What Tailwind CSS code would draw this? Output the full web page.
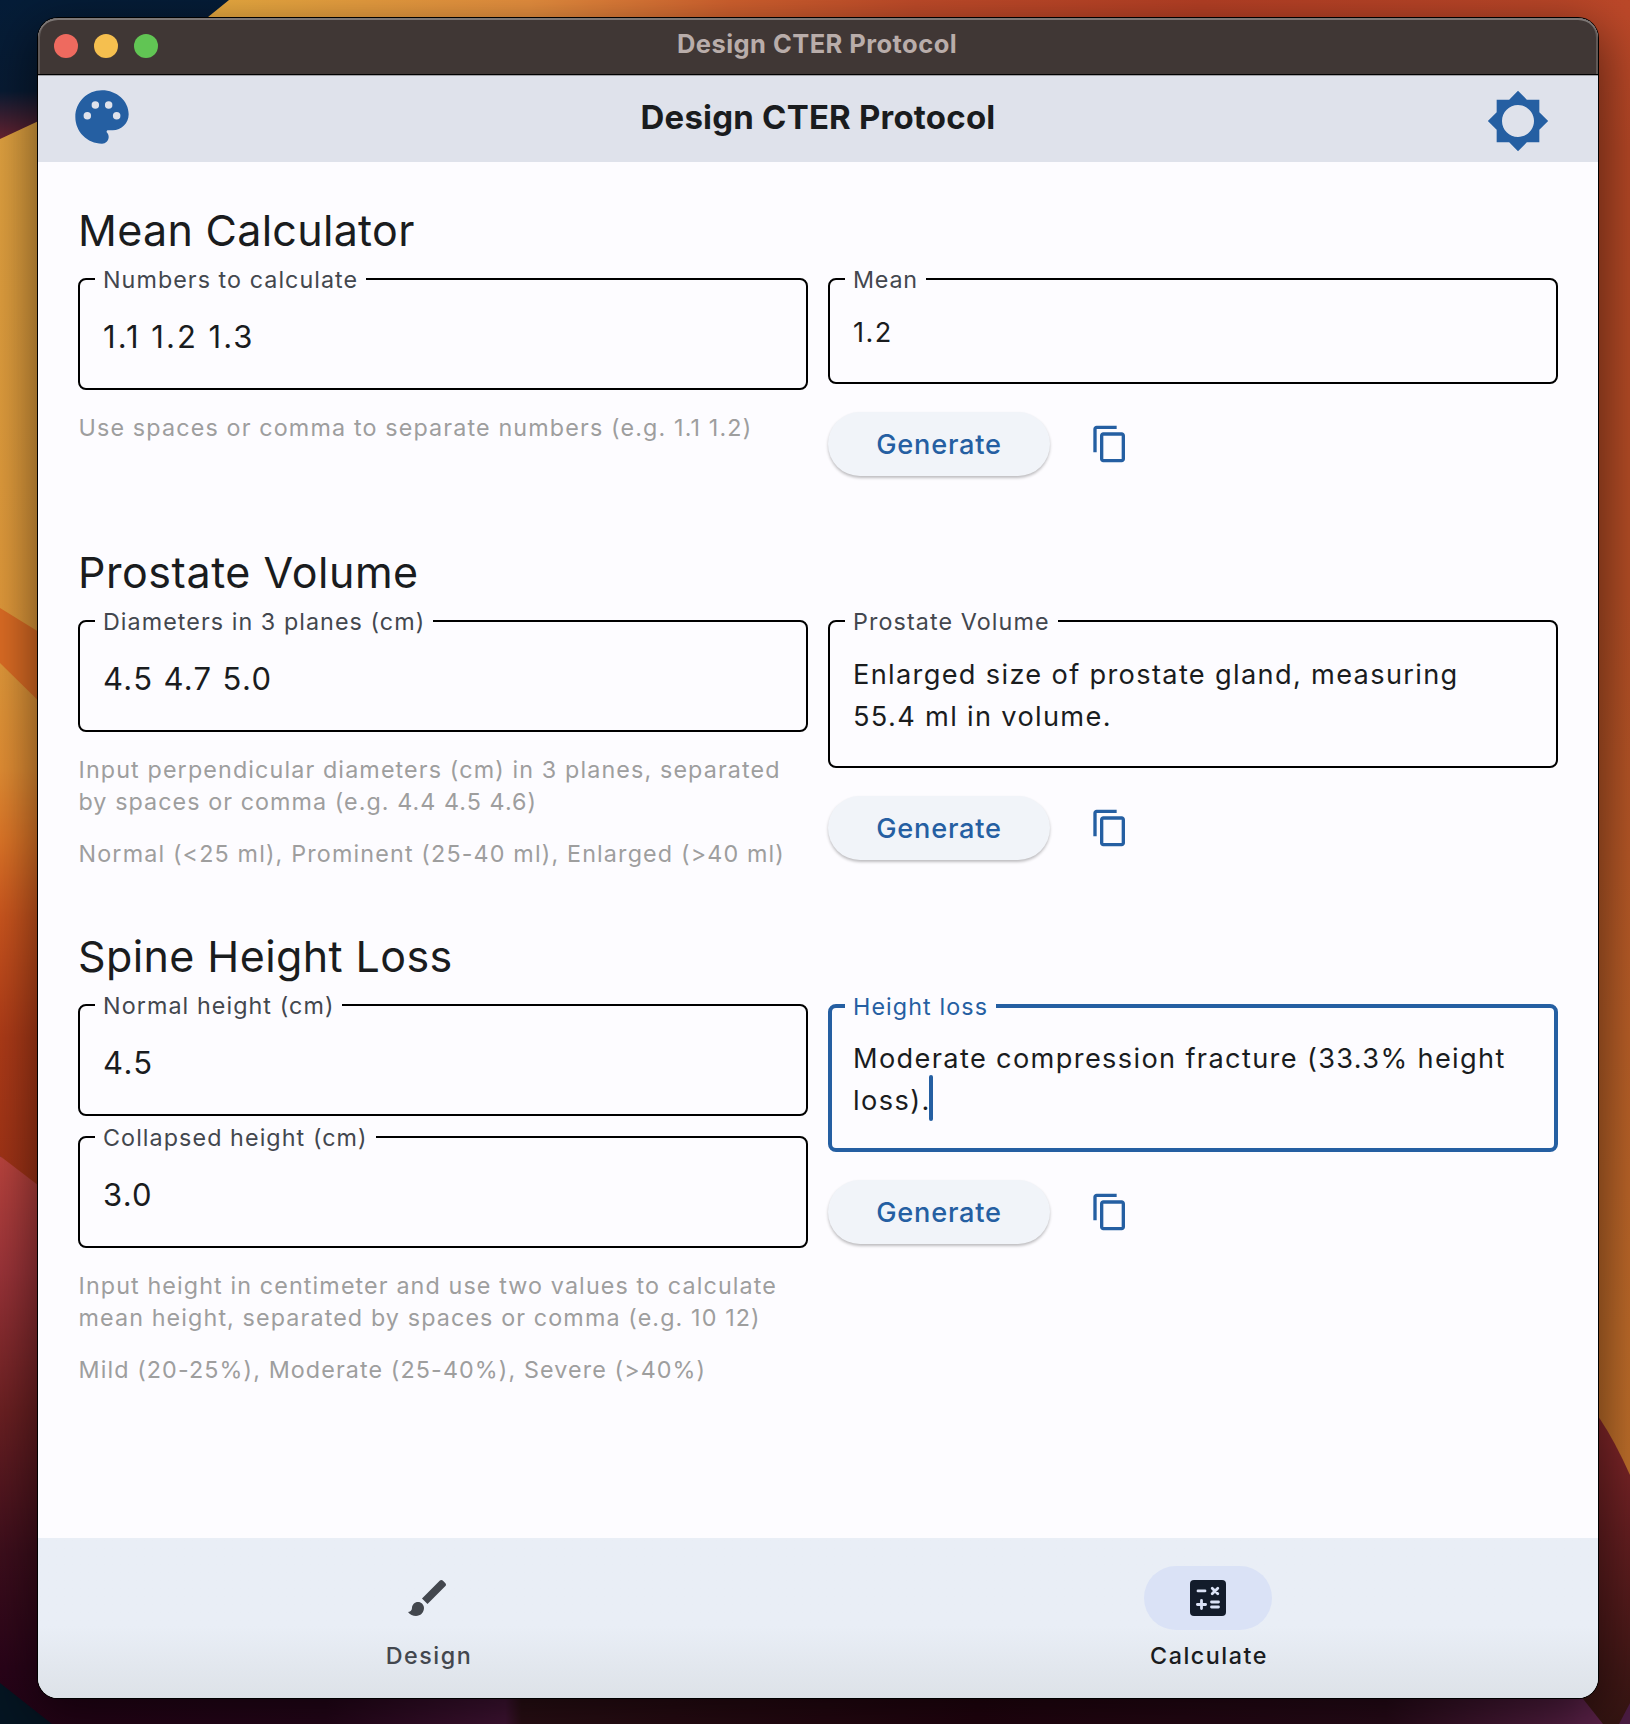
<!DOCTYPE html>
<html lang="en">
<head>
<meta charset="utf-8">
<title>Design CTER Protocol</title>
<script src="https://cdn.jsdelivr.net/npm/@tailwindcss/browser@4"></script>
</head>
<body class="relative h-[1724px] w-[1630px] overflow-hidden bg-[#1a040c] font-['Inter',sans-serif] text-[#1a1c1e]">

<!-- Desktop wallpaper -->
<svg class="absolute inset-0" width="1630" height="1724" viewBox="0 0 1630 1724" aria-hidden="true">
  <defs>
    <linearGradient id="navy" x1="0" y1="0" x2="0" y2="140" gradientUnits="userSpaceOnUse"><stop offset="0" stop-color="#051d38"/><stop offset=".65" stop-color="#081b33"/><stop offset="1" stop-color="#6a2331"/></linearGradient>
    <linearGradient id="top" x1="200" y1="0" x2="1630" y2="0" gradientUnits="userSpaceOnUse"><stop offset="0" stop-color="#ecae41"/><stop offset=".23" stop-color="#e8903f"/><stop offset=".37" stop-color="#d3622f"/><stop offset=".5" stop-color="#c24c2a"/><stop offset=".7" stop-color="#b74025"/><stop offset="1" stop-color="#bc4829"/></linearGradient>
    <linearGradient id="left" x1="0" y1="120" x2="0" y2="1200" gradientUnits="userSpaceOnUse"><stop offset="0" stop-color="#dfa140"/><stop offset=".5" stop-color="#e0983a"/><stop offset=".6" stop-color="#e28e34"/><stop offset=".67" stop-color="#dd7427"/><stop offset=".74" stop-color="#cb551e"/><stop offset=".85" stop-color="#ae3b18"/><stop offset="1" stop-color="#9c3116"/></linearGradient>
    <linearGradient id="rose" x1="0" y1="1156" x2="0" y2="1724" gradientUnits="userSpaceOnUse"><stop offset="0" stop-color="#bb443e"/><stop offset=".2" stop-color="#9c3439"/><stop offset=".45" stop-color="#6b2022"/><stop offset=".7" stop-color="#3d0e1c"/><stop offset=".9" stop-color="#2a0419"/><stop offset="1" stop-color="#230317"/></linearGradient>
    <linearGradient id="right" x1="0" y1="0" x2="0" y2="1480" gradientUnits="userSpaceOnUse"><stop offset="0" stop-color="#bc4829"/><stop offset=".1" stop-color="#b34625"/><stop offset=".4" stop-color="#b34d25"/><stop offset=".7" stop-color="#b85e27"/><stop offset="1" stop-color="#be6f2a"/></linearGradient>
    <linearGradient id="wine" x1="0" y1="1410" x2="0" y2="1724" gradientUnits="userSpaceOnUse"><stop offset="0" stop-color="#86272a"/><stop offset=".4" stop-color="#641e20"/><stop offset="1" stop-color="#351512"/></linearGradient>
    <linearGradient id="bottom" x1="0" y1="0" x2="1630" y2="0" gradientUnits="userSpaceOnUse"><stop offset="0" stop-color="#260317"/><stop offset=".2" stop-color="#27061b"/><stop offset=".31" stop-color="#451538"/><stop offset=".32" stop-color="#2d1016"/><stop offset=".6" stop-color="#240410"/><stop offset=".85" stop-color="#2a0b1a"/><stop offset=".97" stop-color="#5c2249"/></linearGradient>
  </defs>
  <rect width="260" height="160" fill="url(#navy)"/>
  <path d="M229 0H1630V60H155Z" fill="url(#top)"/>
  <path d="M0 139L60 111V1215L0 1156Z" fill="url(#left)"/>
  <path d="M0 608L60 645V722L0 663Z" fill="#dc6c24"/>
  <path d="M0 1156L60 1202V1724H0Z" fill="url(#rose)"/>
  <path d="M1570 20H1630V1480L1570 1395Z" fill="url(#right)"/>
  <path d="M1570 1385Q1600 1408 1630 1475V1724H1570Z" fill="url(#wine)"/>
  <path d="M38 1690H1576L1603 1724H38Z" fill="url(#bottom)"/>
  <path d="M0 1683L52 1724H0Z" fill="#051522"/>
  <path d="M1630 1703L1619 1724H1630Z" fill="#4b1c42"/>
</svg>

<!-- Application window -->
<div class="relative mt-[18px] ml-[38px] flex h-[1680px] w-[1560px] flex-col overflow-hidden rounded-[20px] bg-[#fdfcff] shadow-[0_0_0_1px_#000,0_16px_50px_6px_rgba(0,0,0,0.5)]">

  <header class="flex h-14 shrink-0 items-center rounded-t-[20px] bg-[#403735] px-4 shadow-[inset_0_2px_0_#7d7775,inset_2px_0_0_#605957,inset_-2px_0_0_#605957]">
    <div class="flex w-[104px] gap-4">
      <span class="size-6 rounded-full bg-[#ee6a5f]"></span>
      <span class="size-6 rounded-full bg-[#f5bf4f]"></span>
      <span class="size-6 rounded-full bg-[#61c554]"></span>
    </div>
    <div class="flex-1 pr-[2px] pb-1 text-center text-[25.5px] leading-8 font-bold tracking-[0.45px] text-[#b9adaa]">Design CTER Protocol</div>
    <div class="w-[104px]"></div>
  </header>

  <div class="flex h-[88px] shrink-0 items-center justify-between border-t border-black bg-[#dfe2eb] pr-12 pb-[3px] pl-8 shadow-[inset_0_1px_0_#a0a1a6]">
    <svg class="size-16" viewBox="0 0 24 24"><path fill="#255fa2" d="M12 2C6.49 2 2 6.49 2 12s4.49 10 10 10c1.38 0 2.5-1.12 2.5-2.5 0-.61-.23-1.2-.64-1.67-.08-.1-.13-.21-.13-.33 0-.28.22-.5.5-.5H16c3.31 0 6-2.69 6-6C22 6.04 17.51 2 12 2z"/><g fill="#dfe2eb"><circle cx="6.5" cy="11.5" r="1.4"/><circle cx="9.5" cy="7.5" r="1.4"/><circle cx="14.5" cy="7.5" r="1.4"/><circle cx="17.5" cy="11.5" r="1.4"/></g></svg>
    <h1 class="pl-4 text-[33px] leading-10 font-bold tracking-[0.2px]">Design CTER Protocol</h1>
    <svg class="mt-2 size-16" viewBox="0 0 24 24"><path fill="#255fa2" d="M20 15.31L23.31 12 20 8.69V4h-4.69L12 .69 8.69 4H4v4.69L.69 12 4 15.31V20h4.69L12 23.31 15.31 20H20v-4.69zM12 18c-3.31 0-6-2.69-6-6s2.69-6 6-6 6 2.69 6 6-2.69 6-6 6z"/></svg>
  </div>

  <main class="flex-1 px-10 pt-11">

    <section class="h-[342px]">
      <h2 class="mb-6 text-[43px] leading-[48px] tracking-[0.3px]">Mean Calculator</h2>
      <div class="grid grid-cols-2 items-start gap-5">
        <div>
          <fieldset class="h-28 rounded-lg border-2 border-black pl-[15px]">
            <legend class="h-[2px] px-2 text-[23.3px] leading-[4px] tracking-[1.05px] text-[#43474e]">Numbers to calculate</legend>
            <p class="pt-9 pl-2 text-[31px] leading-[42px] tracking-[2.03px]">1.1 1.2 1.3</p>
          </fieldset>
          <p class="mt-[22px] pl-[0.5px] text-[23.3px] leading-8 tracking-[1.15px] whitespace-nowrap text-[#9e9e9e]">Use spaces or comma to separate numbers (e.g. 1.1 1.2)</p>
        </div>
        <div>
          <fieldset class="h-[106px] rounded-lg border-2 border-black pl-[15px]">
            <legend class="h-[2px] px-2 text-[23.3px] leading-[4px] tracking-[0.8px] text-[#43474e]">Mean</legend>
            <p class="pt-8 pl-2 text-[27.2px] leading-[42px] tracking-[1.4px]">1.2</p>
          </fieldset>
          <div class="mt-7 flex items-center gap-[39.5px]">
            <button class="h-16 w-[222px] rounded-full bg-[#f1f4f9] pt-[2px] text-[27.2px] font-medium tracking-[0.78px] text-[#255fa2] shadow-[0_2px_3px_rgba(0,0,0,0.25)]">Generate</button>
            <svg class="size-10" viewBox="0 0 24 24" fill="#255fa2"><path d="M16 1H4c-1.1 0-2 .9-2 2v14h2V3h12V1zm3 4H8c-1.1 0-2 .9-2 2v14c0 1.1.9 2 2 2h11c1.1 0 2-.9 2-2V7c0-1.1-.9-2-2-2zm0 16H8V7h11v14z"/></svg>
          </div>
        </div>
      </div>
    </section>

    <section class="h-[384px]">
      <h2 class="mb-6 text-[43px] leading-[48px] tracking-[0.55px]">Prostate Volume</h2>
      <div class="grid grid-cols-2 items-start gap-5">
        <div>
          <fieldset class="h-28 rounded-lg border-2 border-black pl-[15px]">
            <legend class="h-[2px] px-2 text-[23.3px] leading-[4px] tracking-[1.06px] text-[#43474e]">Diameters in 3 planes (cm)</legend>
            <p class="pt-9 pl-2 text-[31px] leading-[42px] tracking-[1.35px]">4.5 4.7 5.0</p>
          </fieldset>
          <p class="mt-[22px] pl-[0.5px] text-[23.3px] leading-8 tracking-[1.13px] whitespace-nowrap text-[#9e9e9e]">Input perpendicular diameters (cm) in 3 planes, separated<br><span class="tracking-[1.06px]">by spaces or comma (e.g. 4.4 4.5 4.6)</span></p>
          <p class="mt-5 pl-[0.5px] text-[23.3px] leading-8 tracking-[1.16px] whitespace-nowrap text-[#9e9e9e]">Normal (&lt;25 ml), Prominent (25-40 ml), Enlarged (&gt;40 ml)</p>
        </div>
        <div>
          <fieldset class="h-[148px] rounded-lg border-2 border-black pl-[15px]">
            <legend class="h-[2px] px-2 text-[23.3px] leading-[4px] tracking-[1.1px] text-[#43474e]">Prostate Volume</legend>
            <p class="pt-8 pl-2 text-[27.2px] leading-[42px] tracking-[1.33px]">Enlarged size of prostate gland, measuring<br>55.4 ml in volume.</p>
          </fieldset>
          <div class="mt-7 flex items-center gap-[39.5px]">
            <button class="h-16 w-[222px] rounded-full bg-[#f1f4f9] pt-[2px] text-[27.2px] font-medium tracking-[0.78px] text-[#255fa2] shadow-[0_2px_3px_rgba(0,0,0,0.25)]">Generate</button>
            <svg class="size-10" viewBox="0 0 24 24" fill="#255fa2"><path d="M16 1H4c-1.1 0-2 .9-2 2v14h2V3h12V1zm3 4H8c-1.1 0-2 .9-2 2v14c0 1.1.9 2 2 2h11c1.1 0 2-.9 2-2V7c0-1.1-.9-2-2-2zm0 16H8V7h11v14z"/></svg>
          </div>
        </div>
      </div>
    </section>

    <section>
      <h2 class="mb-6 text-[43px] leading-[48px] tracking-[0.4px]">Spine Height Loss</h2>
      <div class="grid grid-cols-2 items-start gap-5">
        <div>
          <fieldset class="h-28 rounded-lg border-2 border-black pl-[15px]">
            <legend class="h-[2px] px-2 text-[23.3px] leading-[4px] tracking-[1.08px] text-[#43474e]">Normal height (cm)</legend>
            <p class="pt-9 pl-2 text-[31px] leading-[42px] tracking-[1.4px]">4.5</p>
          </fieldset>
          <fieldset class="mt-5 h-28 rounded-lg border-2 border-black pl-[15px]">
            <legend class="h-[2px] px-2 text-[23.3px] leading-[4px] tracking-[1.08px] text-[#43474e]">Collapsed height (cm)</legend>
            <p class="pt-9 pl-2 text-[31px] leading-[42px] tracking-[1.2px]">3.0</p>
          </fieldset>
          <p class="mt-[22px] pl-[0.5px] text-[23.3px] leading-8 tracking-[1.12px] whitespace-nowrap text-[#9e9e9e]">Input height in centimeter and use two values to calculate<br>mean height, separated by spaces or comma (e.g. 10 12)</p>
          <p class="mt-5 pl-[0.5px] text-[23.3px] leading-8 tracking-[1.11px] whitespace-nowrap text-[#9e9e9e]">Mild (20-25%), Moderate (25-40%), Severe (&gt;40%)</p>
        </div>
        <div>
          <fieldset class="h-[148px] rounded-lg border-4 border-[#255fa2] pl-[13px]">
            <legend class="h-1 px-2 text-[23.3px] leading-[6px] tracking-[1.1px] text-[#255fa2]">Height loss</legend>
            <p class="pt-[30px] pl-2 text-[27.2px] leading-[42px] tracking-[1.345px]">Moderate compression fracture (33.3% height<br><span class="relative tracking-[1.4px]">loss).<span class="absolute -top-[9px] -right-[2px] h-[46px] w-1 rounded-full bg-[#255fa2]"></span></span></p>
          </fieldset>
          <div class="mt-7 flex items-center gap-[39.5px]">
            <button class="h-16 w-[222px] rounded-full bg-[#f1f4f9] pt-[2px] text-[27.2px] font-medium tracking-[0.78px] text-[#255fa2] shadow-[0_2px_3px_rgba(0,0,0,0.25)]">Generate</button>
            <svg class="size-10" viewBox="0 0 24 24" fill="#255fa2"><path d="M16 1H4c-1.1 0-2 .9-2 2v14h2V3h12V1zm3 4H8c-1.1 0-2 .9-2 2v14c0 1.1.9 2 2 2h11c1.1 0 2-.9 2-2V7c0-1.1-.9-2-2-2zm0 16H8V7h11v14z"/></svg>
          </div>
        </div>
      </div>
    </section>
  </main>

  <nav class="grid h-40 shrink-0 grid-cols-2 bg-linear-to-b from-[#e9eef6] from-55% to-[#dde2e8] pt-7 text-[23.3px] leading-8 font-medium tracking-[1.53px]">
    <a class="flex flex-col items-center gap-[10px] text-[#43474e]">
      <span class="flex h-16 w-32 items-center justify-center"><svg class="size-12" viewBox="0 0 24 24" fill="#43474e"><path d="M7 14c-1.66 0-3 1.34-3 3 0 1.31-1.16 2-2 2 .92 1.22 2.49 2 4 2 2.21 0 4-1.79 4-4 0-1.66-1.34-3-3-3zm13.71-9.37l-1.34-1.34c-.39-.39-1.02-.39-1.41 0L9 12.25 11.75 15l8.96-8.96c.39-.39.39-1.02 0-1.41z"/></svg></span>
      <span class="pl-[2px]">Design</span>
    </a>
    <a class="flex flex-col items-center gap-[10px]">
      <span class="flex h-16 w-32 items-center justify-center rounded-full bg-[#dae2f6]"><svg class="size-12" viewBox="0 0 24 24"><rect x="3" y="3" width="18" height="18" rx="2" fill="#131c2b"/><path d="M7 8.47h3.5M14.1 7.07l2.8 2.8M16.9 7.07l-2.8 2.8M8.75 13.2v4.1M6.7 15.25h4.1M13.75 14h3.5M13.75 16.5h3.5" fill="none" stroke="#dae2f6" stroke-width="1.4" stroke-linecap="round"/></svg></span>
      <span class="pl-[2px]">Calculate</span>
    </a>
  </nav>
</div>
</body>
</html>
